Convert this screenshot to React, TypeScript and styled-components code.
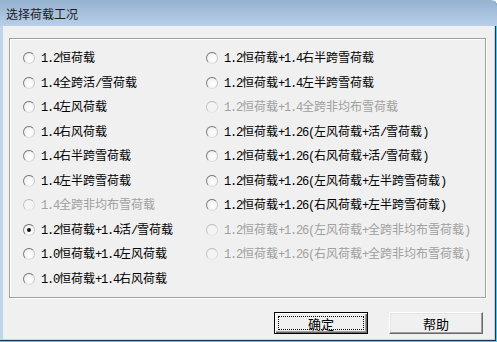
import styled, { createGlobalStyle } from "styled-components";

const GlobalStyle = createGlobalStyle`
  body {
    margin: 0;
    background: #ffffff;
  }
`;

type Option = { label: string; checked?: boolean; disabled?: boolean };

const leftOptions: Option[] = [
  { label: "1.2恒荷载" },
  { label: "1.4全跨活/雪荷载" },
  { label: "1.4左风荷载" },
  { label: "1.4右风荷载" },
  { label: "1.4右半跨雪荷载" },
  { label: "1.4左半跨雪荷载" },
  { label: "1.4全跨非均布雪荷载", disabled: true },
  { label: "1.2恒荷载+1.4活/雪荷载", checked: true },
  { label: "1.0恒荷载+1.4左风荷载" },
  { label: "1.0恒荷载+1.4右风荷载" },
];

const rightOptions: Option[] = [
  { label: "1.2恒荷载+1.4右半跨雪荷载" },
  { label: "1.2恒荷载+1.4左半跨雪荷载" },
  { label: "1.2恒荷载+1.4全跨非均布雪荷载", disabled: true },
  { label: "1.2恒荷载+1.26(左风荷载+活/雪荷载)" },
  { label: "1.2恒荷载+1.26(右风荷载+活/雪荷载)" },
  { label: "1.2恒荷载+1.26(左风荷载+左半跨雪荷载)" },
  { label: "1.2恒荷载+1.26(右风荷载+左半跨雪荷载)" },
  { label: "1.2恒荷载+1.26(左风荷载+全跨非均布雪荷载)", disabled: true },
  { label: "1.2恒荷载+1.26(右风荷载+全跨非均布雪荷载)", disabled: true },
];

// ascii runs get the narrow half-width font, like SimSun does
const MixedText = ({ text }: { text: string }) => (
  <>
    {text.split(/([\x20-\x7e]+)/).map((part, i) =>
      /^[\x20-\x7e]+$/.test(part) ? <Ascii key={i}>{part}</Ascii> : part
    )}
  </>
);

const RadioItem = ({ label, checked, disabled }: Option) => (
  <Row $disabled={disabled}>
    <Circle $checked={checked} $disabled={disabled} />
    <Label>
      <MixedText text={label} />
    </Label>
  </Row>
);

const App = () => {
  return (
    <>
      <GlobalStyle />
      <Window>
        <TitleBar>选择荷载工况</TitleBar>
        <Client>
          <GroupBox>
            <Column>
              {leftOptions.map((o) => (
                <RadioItem key={o.label} {...o} />
              ))}
            </Column>
            <Column>
              {rightOptions.map((o) => (
                <RadioItem key={o.label} {...o} />
              ))}
            </Column>
          </GroupBox>
          <ButtonRow>
            <Button $default>
              <FocusRect>确定</FocusRect>
            </Button>
            <Button>帮助</Button>
          </ButtonRow>
        </Client>
      </Window>
    </>
  );
};

export default App;

const Window = styled.div`
  width: 497px;
  height: 342px;
  box-sizing: border-box;
  display: flex;
  flex-direction: column;
  background: #bfd5ec;
  border-top-right-radius: 6px;
  box-shadow: inset -1px -1px 0 #55c8ee, inset -2px -2px 0 #22344a;
  font-family: "Noto Sans CJK SC", sans-serif;
  font-size: 12px;
  color: #000;
  overflow: hidden;
`;

const TitleBar = styled.div`
  height: 26px;
  flex: none;
  display: flex;
  align-items: center;
  padding-left: 6px;
  background: linear-gradient(#95b2d0, #b8cfe8);
  font-size: 12px;
  color: #1a1a1a;
  border-top-right-radius: 6px;
`;

const Client = styled.div`
  flex: 1;
  margin: 0 3px 3px 3px;
  background: #f0f0f0;
  display: flex;
  flex-direction: column;
  padding: 12px 8px 0 6px;
`;

const GroupBox = styled.div`
  height: 260px;
  box-sizing: border-box;
  border: 1px solid #a0a0a0;
  box-shadow: 1px 1px 0 #ffffff, inset 1px 1px 0 #ffffff;
  display: grid;
  grid-template-columns: 183px 1fr;
  padding: 7px 0 0 13px;
`;

const Column = styled.div`
  display: flex;
  flex-direction: column;
`;

const Row = styled.div<{ $disabled?: boolean }>`
  height: 24.5px;
  display: flex;
  align-items: center;
  gap: 6px;
  color: ${(p) => (p.$disabled ? "#a0a0a0" : "#000")};
`;

const Circle = styled.span<{ $checked?: boolean; $disabled?: boolean }>`
  position: relative;
  width: 12px;
  height: 12px;
  box-sizing: border-box;
  border-radius: 50%;
  border: 1px solid;
  border-color: ${(p) =>
    p.$disabled
      ? "#b8b8b8 #dadada #e6e6e6 #c4c4c4"
      : "#6f6f6f #c8c8c8 #dedede #7f7f7f"};
  background: ${(p) =>
    p.$disabled ? "#f4f4f4" : "radial-gradient(circle at 60% 60%, #fff, #ececec)"};
  flex: none;

  &::after {
    content: "";
    display: ${(p) => (p.$checked ? "block" : "none")};
    position: absolute;
    left: 3px;
    top: 3px;
    width: 4px;
    height: 4px;
    border-radius: 50%;
    background: #111;
  }
`;

const Label = styled.span`
  line-height: 16px;
  white-space: nowrap;
`;

const Ascii = styled.span`
  font-family: "Liberation Mono", monospace;
  font-size: 12px;
  letter-spacing: -1.2px;
`;

const ButtonRow = styled.div`
  display: flex;
  justify-content: flex-end;
  gap: 21px;
  margin-top: 14px;
  padding-right: 3px;
`;

const Button = styled.div<{ $default?: boolean }>`
  width: 94px;
  height: 22px;
  box-sizing: border-box;
  display: flex;
  align-items: center;
  justify-content: center;
  background: #f0f0f0;
  border: 1px solid;
  border-color: ${(p) =>
    p.$default ? "#000" : "#ffffff #696969 #696969 #ffffff"};
  box-shadow: ${(p) =>
    p.$default
      ? "inset 1px 1px 0 #ffffff, inset -1px -1px 0 #696969, inset -2px -2px 0 #a0a0a0"
      : "inset -1px -1px 0 #a0a0a0, inset 1px 1px 0 #e3e3e3"};
  font-size: 13px;
  padding: ${(p) => (p.$default ? "3px" : "0")};
`;

const FocusRect = styled.span`
  flex: 1;
  align-self: stretch;
  display: flex;
  align-items: center;
  justify-content: center;
  border: 1px dotted #000;
`;
